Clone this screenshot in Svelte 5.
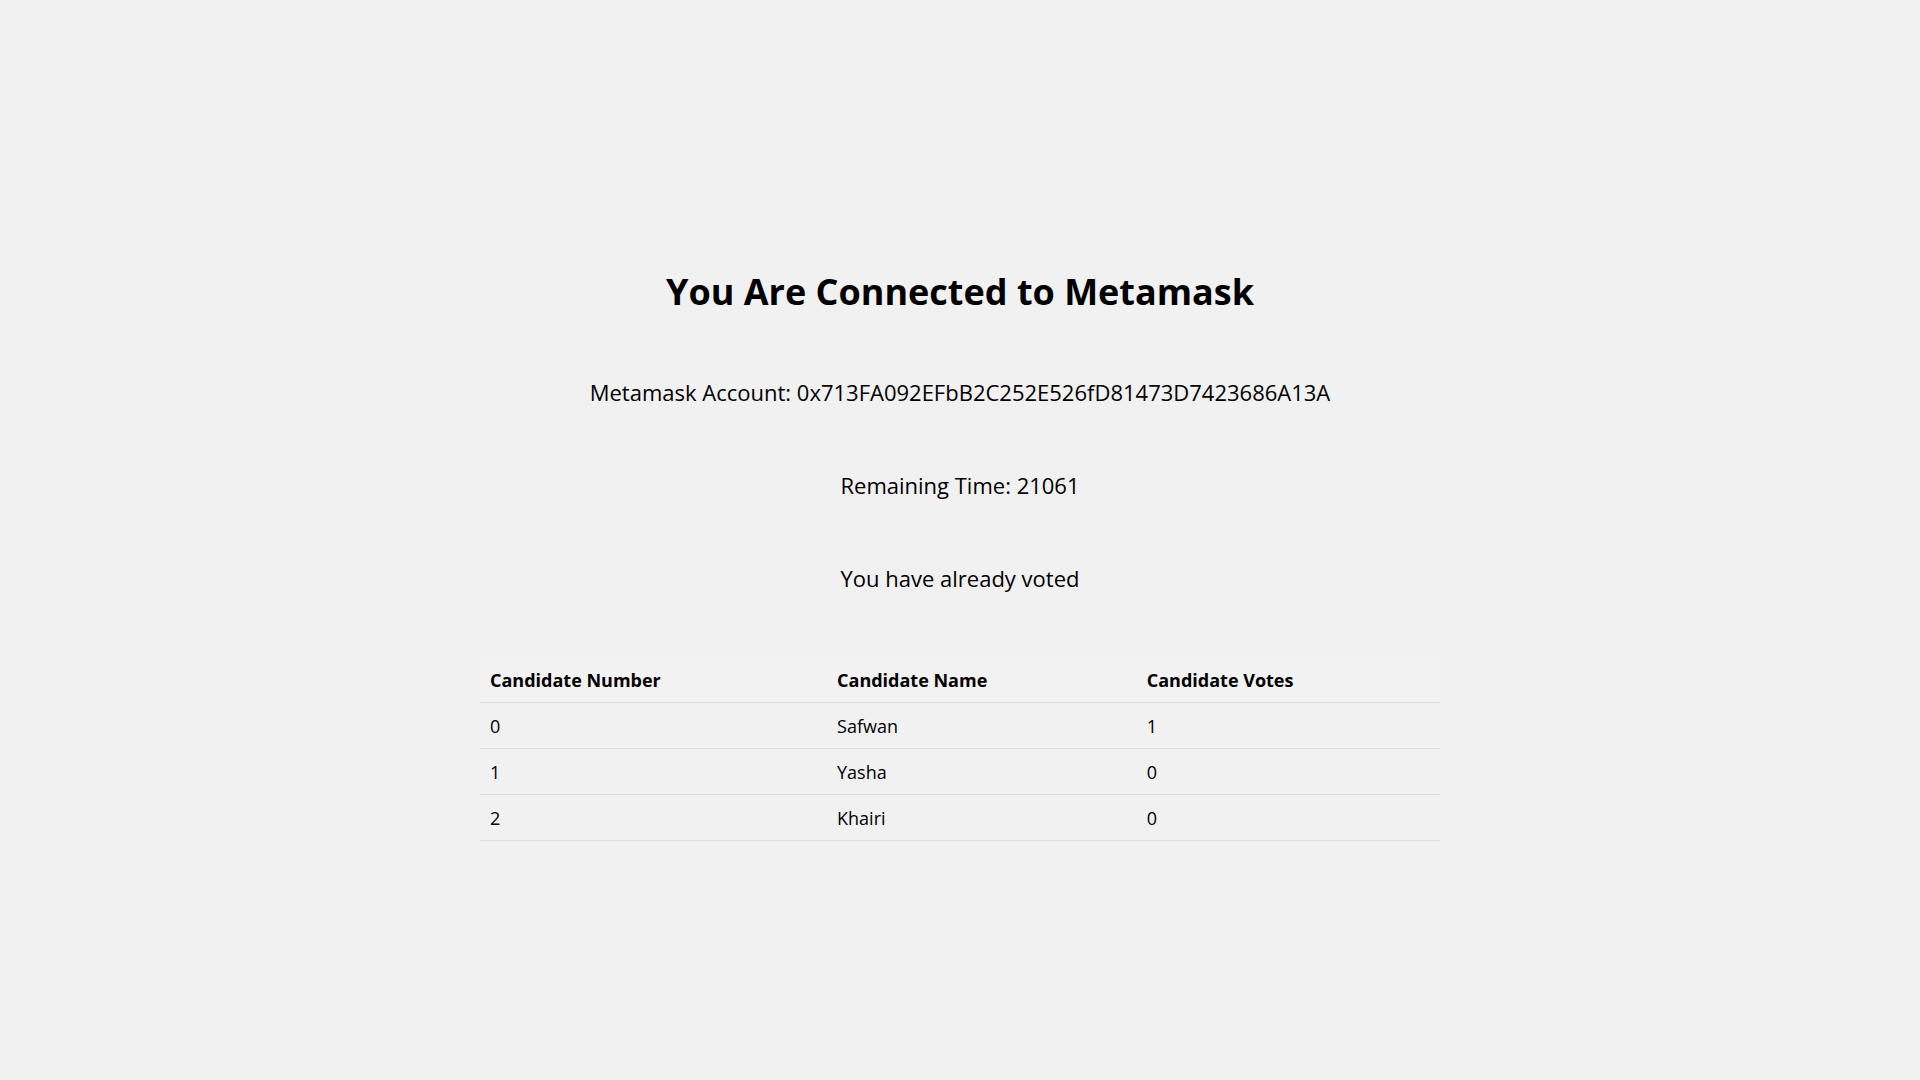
<script>
  const account = '0x713FA092EFbB2C252E526fD81473D7423686A13A';
  const remainingTime = 21061;
  const candidates = [
    { name: 'Safwan', votes: 1 },
    { name: 'Yasha', votes: 0 },
    { name: 'Khairi', votes: 0 }
  ];
</script>

<main>
  <h1>You Are Connected to Metamask</h1>
  <p>Metamask Account: {account}</p>
  <p>Remaining Time: {remainingTime}</p>
  <p>You have already voted</p>
  <table>
    <thead>
      <tr>
        <th scope="col">Candidate Number</th>
        <th scope="col">Candidate Name</th>
        <th scope="col">Candidate Votes</th>
      </tr>
    </thead>
    <tbody>
      {#each candidates as candidate, index}
        <tr>
          <td>{index}</td>
          <td>{candidate.name}</td>
          <td>{candidate.votes}</td>
        </tr>
      {/each}
    </tbody>
  </table>
</main>

<style>
  :global(body) {
    margin: 0;
    background: #f1f1f1;
  }

  main {
    display: flex;
    flex-direction: column;
    align-items: center;
    justify-content: center;
    min-height: 100vh;
    font-family: 'Segoe UI', 'Open Sans', 'Noto Sans', sans-serif;
    color: #000;
  }

  h1 {
    margin: 26px 0 57px;
    font-size: 36px;
    line-height: 54px;
    font-weight: 700;
  }

  p {
    margin: 0 0 60px;
    font-size: 22px;
    line-height: 33px;
  }

  table {
    width: 50%;
    margin-top: 2px;
    border-collapse: collapse;
    font-size: 18px;
    line-height: 25px;
  }

  th,
  td {
    padding: 11px 10px 9px;
    border-bottom: 1px solid #ddd;
    text-align: left;
  }

  th {
    background: #f2f2f2;
  }
</style>
